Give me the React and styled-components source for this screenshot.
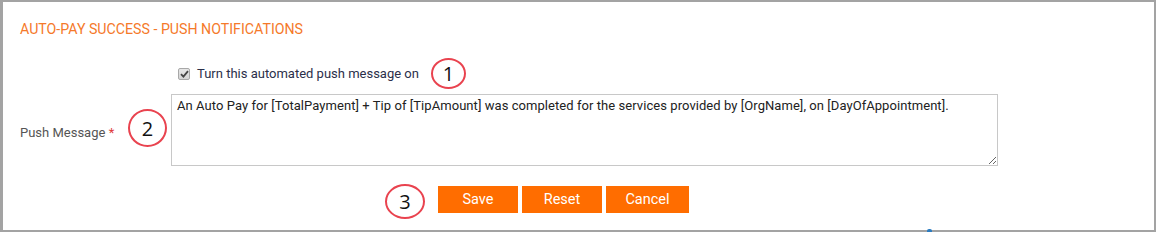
import React from "react";
import styled, { createGlobalStyle } from "styled-components";

const Global = createGlobalStyle`
  html, body { margin: 0; padding: 0; background: #fff; }
  body { font-family: Roboto, "Liberation Sans", sans-serif; }
`;

const Panel = styled.div`
  box-sizing: border-box;
  width: 1156px;
  height: 232px;
  border: 2px solid #a3a3a3;
  border-left-width: 3px;
  padding: 19px 0 0 17px;
  background: #fff;
  position: relative;
`;

const Title = styled.h2`
  margin: 0;
  font-family: Roboto, "Liberation Sans", sans-serif;
  font-weight: 400;
  font-size: 14.2px;
  line-height: 16px;
  color: #f5792a;
`;

const CheckRow = styled.div`
  display: flex;
  align-items: center;
  margin-top: 21px;
  padding-left: 158px;
  height: 31px;
`;

const Box = styled.span`
  box-sizing: border-box;
  width: 12px;
  height: 12px;
  border: 1px solid #a8a8a8;
  border-radius: 2px;
  background: linear-gradient(#e6e6e6, #d4d4d4);
  display: flex;
  align-items: center;
  justify-content: center;
`;

const CheckLabel = styled.span`
  margin-left: 7px;
  font-size: 13px;
  color: #2b2f4a;
`;

const Marker = styled.span`
  box-sizing: border-box;
  flex: none;
  width: ${(p) => p.w}px;
  height: ${(p) => p.h}px;
  margin-left: ${(p) => p.ml || 0}px;
  margin-top: ${(p) => p.mt || 0}px;
  border: 2px solid #e9434f;
  border-radius: 50%;
  display: flex;
  align-items: center;
  justify-content: center;
  font-family: "Open Sans", "Noto Sans", sans-serif;
  font-size: 20px;
  color: #111;
`;

const FieldRow = styled.div`
  display: flex;
  align-items: center;
  margin-top: 5px;
`;

const LabelCell = styled.div`
  width: 151px;
  display: flex;
  align-items: center;
`;

const FieldLabel = styled.label`
  font-size: 13px;
  color: #555;
  margin-top: 4px;
  width: 108px;
  flex: none;
`;

const Req = styled.span`
  color: #e03a3a;
`;

const MessageArea = styled.textarea`
  box-sizing: border-box;
  width: 827px;
  height: 72px;
  margin: 0;
  border: 1px solid #c8c8c8;
  padding: 3px 5px;
  font-family: Roboto, "Liberation Sans", sans-serif;
  font-size: 13px;
  letter-spacing: 0.06px;
  line-height: 16px;
  color: #222;
  resize: vertical;
  outline: none;
`;

const ButtonRow = styled.div`
  display: flex;
  align-items: flex-start;
  margin-top: 18px;
  padding-left: 365px;
`;

const Buttons = styled.div`
  display: flex;
  gap: 4px;
  margin-left: 13px;
  margin-top: 2px;
`;

const Btn = styled.button`
  width: ${(p) => p.w}px;
  height: 27px;
  border: 0;
  margin: 0;
  padding: 0;
  background: #ff6d00;
  color: #fff;
  font-family: Roboto, "Liberation Sans", sans-serif;
  font-size: 14.5px;
  cursor: pointer;
`;

const Tick = styled.span`
  position: absolute;
  left: 924px;
  bottom: -2px;
  width: 5px;
  height: 3px;
  background: #2a7bc0;
  border-radius: 2px 2px 0 0;
`;

export default function App() {
  return (
    <>
      <Global />
      <Panel>
        <Title>AUTO-PAY SUCCESS - PUSH NOTIFICATIONS</Title>
        <CheckRow>
          <Box>
            <svg width="9" height="8" viewBox="0 0 9 8">
              <path d="M1 4.2 L3.4 6.6 L8 1.2" fill="none" stroke="#444" strokeWidth="1.8" />
            </svg>
          </Box>
          <CheckLabel>Turn this automated push message on</CheckLabel>
          <Marker w={35} h={31} ml={12}>1</Marker>
        </CheckRow>
        <FieldRow>
          <LabelCell>
            <FieldLabel>
              Push Message <Req>*</Req>
            </FieldLabel>
            <Marker w={39} h={38} mt={-4}>2</Marker>
          </LabelCell>
          <MessageArea
            readOnly
            defaultValue="An Auto Pay for [TotalPayment] + Tip of [TipAmount] was completed for the services provided by [OrgName], on [DayOfAppointment]."
          />
        </FieldRow>
        <ButtonRow>
          <Marker w={40} h={35}>3</Marker>
          <Buttons>
            <Btn w={80}>Save</Btn>
            <Btn w={80}>Reset</Btn>
            <Btn w={83}>Cancel</Btn>
          </Buttons>
        </ButtonRow>
        <Tick />
      </Panel>
    </>
  );
}
